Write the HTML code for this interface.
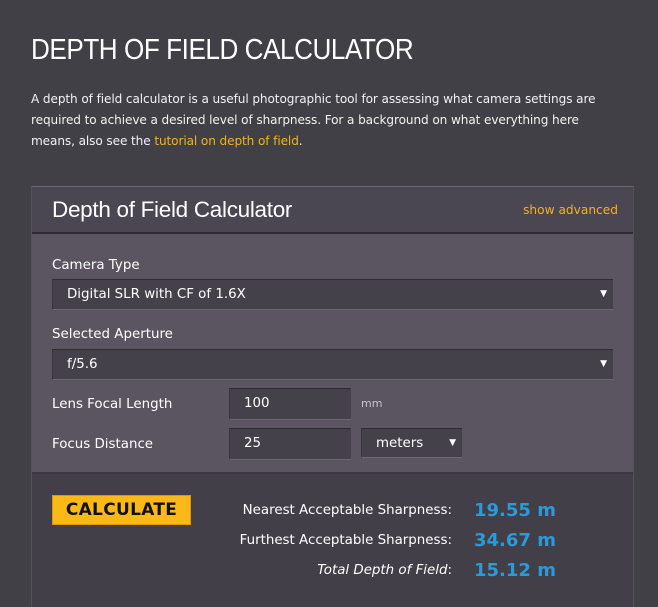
<!DOCTYPE html>
<html><head><style>
body{margin:0;width:658px;height:599px;overflow:hidden;background:#414046;font-family:"DejaVu Sans","Liberation Sans",sans-serif;color:#fff;position:relative}
.a{position:absolute}
h1{position:absolute;left:31px;top:34px;margin:0;font:300 29px "Liberation Sans",sans-serif;letter-spacing:-0.5px;color:#fff;transform:scaleX(0.9);transform-origin:left}
p{position:absolute;left:31px;top:89px;width:590px;margin:0;font-size:12.1px;line-height:21px;color:#f2f2f2;letter-spacing:-0.1px}
p span{color:#f4b21f}
.panel{position:absolute;left:31px;top:186px;width:601px;height:420px;background:#433f49;border-top:1px solid #6a6670;border-left:1px solid #55515a;border-right:1px solid #55515a}
.hd{position:absolute;left:0;top:0;width:601px;height:45px;background:#4a4652;border-bottom:2px solid #2e2b33}
.hd .t{position:absolute;left:20px;top:10px;font:22.5px "Liberation Sans",sans-serif;letter-spacing:-0.3px}
.hd .s{position:absolute;right:15px;top:16px;font-size:12.2px;color:#f4b21f}
.fm{position:absolute;left:0;top:47px;width:601px;height:238px;background:#5a5560;border-bottom:2px solid #3a3740}
.lb{position:absolute;font-size:13.4px;color:#fff}
.in{position:absolute;background:#45414b;border-top:1px solid #2e2b33;border-left:1px solid #38353d;border-bottom:1px solid #6d6873;font-size:13.4px;line-height:29px;box-sizing:border-box;padding-left:14px}
.ar{position:absolute;right:6px;top:0;font-size:9px}
.btn{position:absolute;left:20px;top:308px;width:139px;height:30px;background:#fbb917;border:1px solid #d99a00;box-sizing:border-box;color:#111;font:bold 17px "DejaVu Sans",sans-serif;text-align:center;line-height:29px;letter-spacing:0.3px}
.rl{position:absolute;right:181px;font-size:13.4px;text-align:right;white-space:nowrap}
.rv{position:absolute;left:442px;font:bold 18px "DejaVu Sans",sans-serif;color:#2a9ad8}
</style></head><body>
<h1>DEPTH OF FIELD CALCULATOR</h1>
<p>A depth of field calculator is a useful photographic tool for assessing what camera settings are required to achieve a desired level of sharpness. For a background on what everything here means, also see the <span>tutorial on depth of field</span>.</p>
<div class="panel">
<div class="hd"><div class="t">Depth of Field Calculator</div><div class="s">show advanced</div></div>
<div class="fm">
<div class="lb" style="left:20px;top:24px">Camera Type</div>
<div class="in" style="left:20px;top:45px;width:561px;height:31px">Digital SLR with CF of 1.6X<span class="ar">▼</span></div>
<div class="lb" style="left:20px;top:93px">Selected Aperture</div>
<div class="in" style="left:20px;top:115px;width:561px;height:31px">f/5.6<span class="ar">▼</span></div>
<div class="lb" style="left:20px;top:163px">Lens Focal Length</div>
<div class="in" style="left:197px;top:154px;width:122px;height:32px">100</div>
<div class="a" style="left:329px;top:163px;font-size:11px;color:#c8c4cc">mm</div>
<div class="lb" style="left:20px;top:203px">Focus Distance</div>
<div class="in" style="left:197px;top:194px;width:122px;height:32px">25</div>
<div class="in" style="left:329px;top:194px;width:101px;height:30px">meters<span class="ar">▼</span></div>
</div>
<div class="btn">CALCULATE</div>
<div class="rl" style="top:316px">Nearest Acceptable Sharpness:</div>
<div class="rl" style="top:346px">Furthest Acceptable Sharpness:</div>
<div class="rl" style="top:376px"><i>Total Depth of Field</i>:</div>
<div class="rv" style="top:313px">19.55 m</div>
<div class="rv" style="top:343px">34.67 m</div>
<div class="rv" style="top:373px">15.12 m</div>
</div>
</body></html>
